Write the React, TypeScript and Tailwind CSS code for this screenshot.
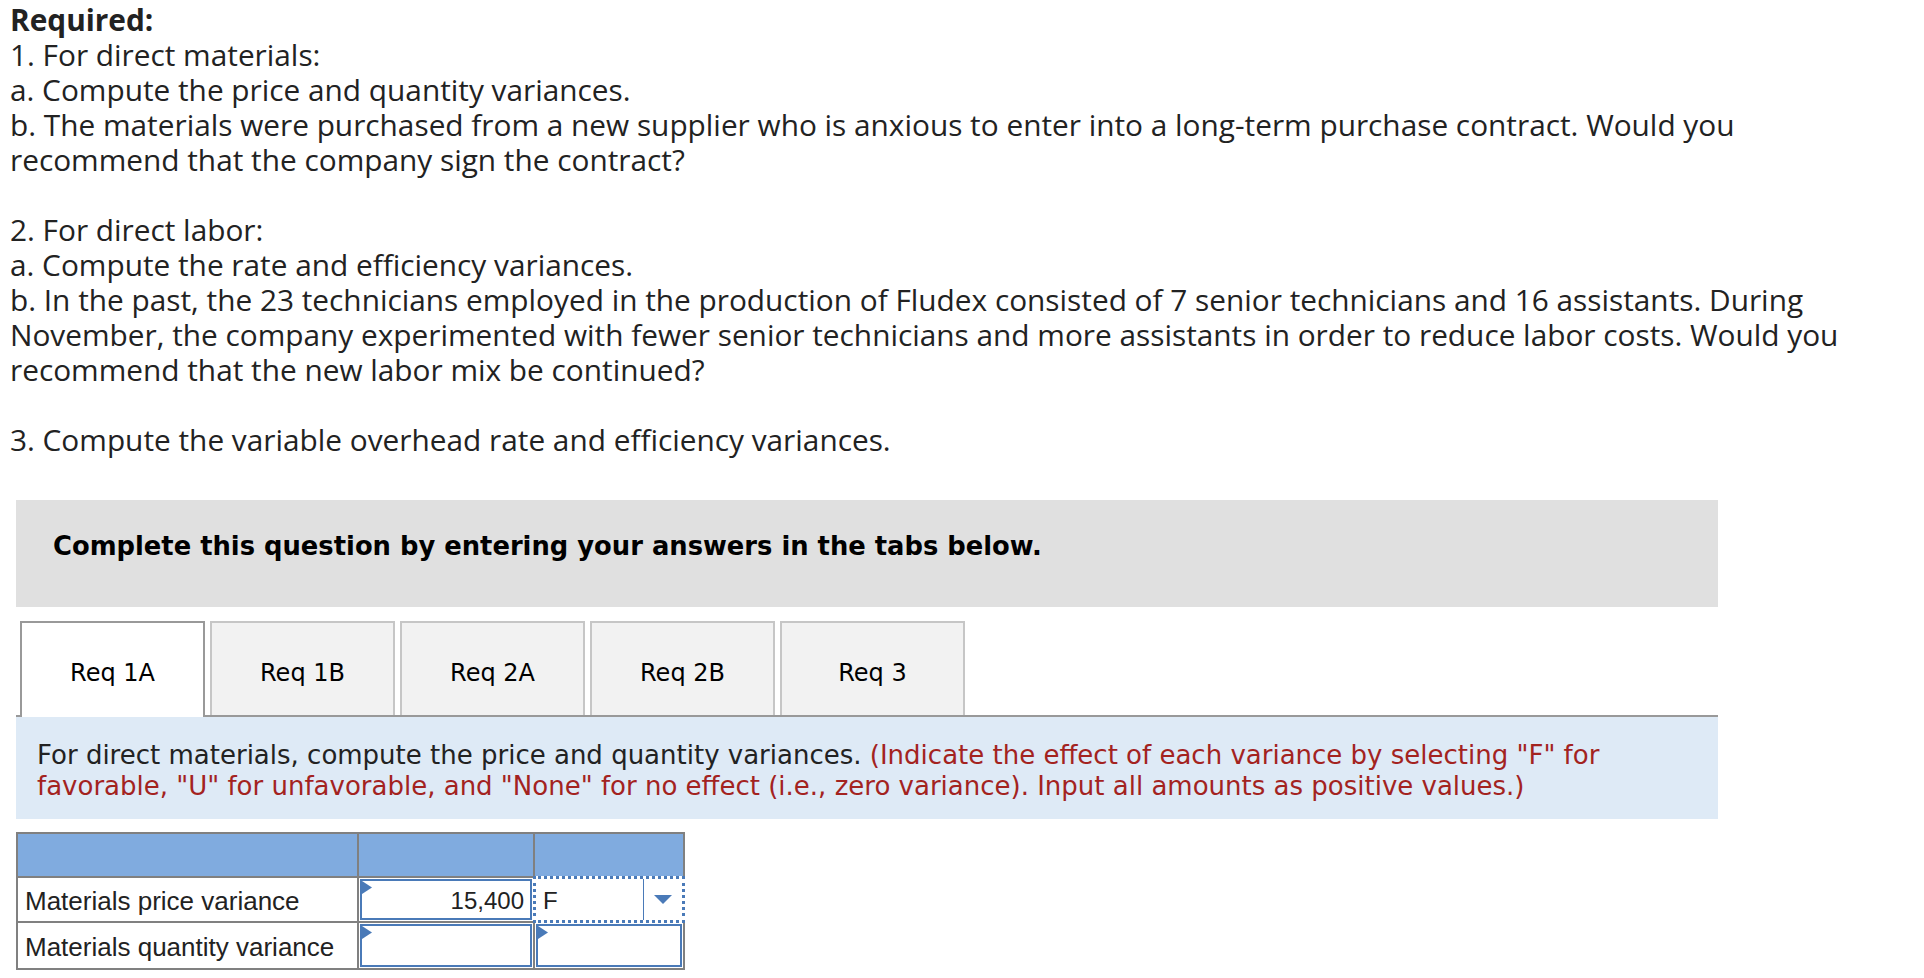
const body = "font-['Open_Sans',sans-serif]";
const verdana = "font-['DejaVu_Sans',Verdana,sans-serif]";
const arial = "font-['Liberation_Sans',Arial,sans-serif]";

function Marker() {
  return (
    <svg className="absolute left-0 top-0" width="10" height="13" viewBox="0 0 10 13">
      <polygon points="0,0 10,6.5 0,13" fill="#4a7ab8" />
    </svg>
  );
}

function Tab({ label, active }: { label: string; active?: boolean }) {
  return active ? (
    <div className={`-mb-[2px] flex h-[96px] w-[185px] items-center justify-center border-2 border-b-0 border-[#999] bg-white pt-[5px] text-[24px] text-black ${verdana}`}>
      {label}
    </div>
  ) : (
    <div className={`flex h-[94px] w-[185px] items-center justify-center border-2 border-b-0 border-[#c6c6c6] bg-[#f2f2f2] pt-[7px] text-[24px] text-black ${verdana}`}>
      {label}
    </div>
  );
}

export default function App() {
  return (
    <div className="min-h-screen bg-white text-[#222]">
      {/* question text */}
      <div className={`w-[1860px] pl-[10px] pt-[2px] text-[29.8px] leading-[35px] ${body}`}>
        <p className="font-bold">Required:</p>
        <p>1. For direct materials:</p>
        <p>a. Compute the price and quantity variances.</p>
        <p className="mb-[35px]">
          b. The materials were purchased from a new supplier who is anxious to enter into a long-term purchase
          contract. Would you recommend that the company sign the contract?
        </p>
        <p>2. For direct labor:</p>
        <p>a. Compute the rate and efficiency variances.</p>
        <p className="mb-[35px]">
          b. In the past, the 23 technicians employed in the production of Fludex consisted of 7 senior technicians
          and 16 assistants. During November, the company experimented with fewer senior technicians and more
          assistants in order to reduce labor costs. Would you recommend that the new labor mix be continued?
        </p>
        <p>3. Compute the variable overhead rate and efficiency variances.</p>
      </div>

      <div className="ml-[16px] mt-[43px] w-[1702px]">
        {/* banner */}
        <div className={`h-[107px] bg-[#e0e0e0] pl-[37px] pt-[31px] text-[25.8px] font-bold leading-[30px] text-black ${verdana}`}>
          Complete this question by entering your answers in the tabs below.
        </div>

        {/* tabs */}
        <div className="mt-[14px] flex items-end gap-[5px] border-b-2 border-[#999] pl-[4px]">
          <Tab label="Req 1A" active />
          <Tab label="Req 1B" />
          <Tab label="Req 2A" />
          <Tab label="Req 2B" />
          <Tab label="Req 3" />
        </div>

        {/* instructions */}
        <div className={`h-[102px] bg-[#deeaf6] pl-[21px] pr-[20px] pt-[23px] text-[26px] leading-[31px] text-[#222] ${verdana}`}>
          For direct materials, compute the price and quantity variances.{" "}
          <span className="text-[#a3231f]">
            (Indicate the effect of each variance by selecting "F" for favorable, "U" for unfavorable, and "None"
            for no effect (i.e., zero variance). Input all amounts as positive values.)
          </span>
        </div>

        {/* answer table */}
        <div className={`mt-[13px] w-[669px] border-2 border-[#808080] text-[#222] ${arial}`}>
          <div className="flex h-[42px] bg-[#80abdf]">
            <div className="w-[341px] border-r-2 border-[#808080]" />
            <div className="w-[176px] border-r-2 border-[#808080]" />
            <div className="flex-1" />
          </div>

          <div className="flex h-[45px] border-t-2 border-[#808080]">
            <div className="flex w-[341px] items-center border-r-2 border-[#808080] pl-[7px] pt-[4px] text-[26px]">
              Materials price variance
            </div>
            <div className="w-[176px] border-r-2 border-[#808080] p-px">
              <div className="relative flex h-full items-center justify-end border-2 border-[#4a7ab8] pr-[6px] pt-[3px] text-[24px]">
                <Marker />
                15,400
              </div>
            </div>
            <div className="relative flex-1">
              <div className="absolute -inset-[2px] flex border-[3px] border-dotted border-[#4a7ab8] bg-white">
                <div className="flex flex-1 items-center pl-[7px] pt-[3px] text-[24px]">F</div>
                <div className="flex w-[39px] items-center justify-center border-l border-[#4a7ab8]">
                  <svg width="18" height="9" viewBox="0 0 18 9">
                    <polygon points="0,0 18,0 9,9" fill="#4a7ab8" />
                  </svg>
                </div>
              </div>
            </div>
          </div>

          <div className="flex h-[47px] border-t-2 border-[#808080]">
            <div className="flex w-[341px] items-center border-r-2 border-[#808080] pl-[7px] pt-[4px] text-[26px]">
              Materials quantity variance
            </div>
            <div className="w-[176px] border-r-2 border-[#808080] p-px">
              <div className="relative h-full border-2 border-[#4a7ab8]">
                <Marker />
              </div>
            </div>
            <div className="flex-1 p-px">
              <div className="relative h-full border-2 border-[#4a7ab8]">
                <Marker />
              </div>
            </div>
          </div>
        </div>
      </div>
    </div>
  );
}
